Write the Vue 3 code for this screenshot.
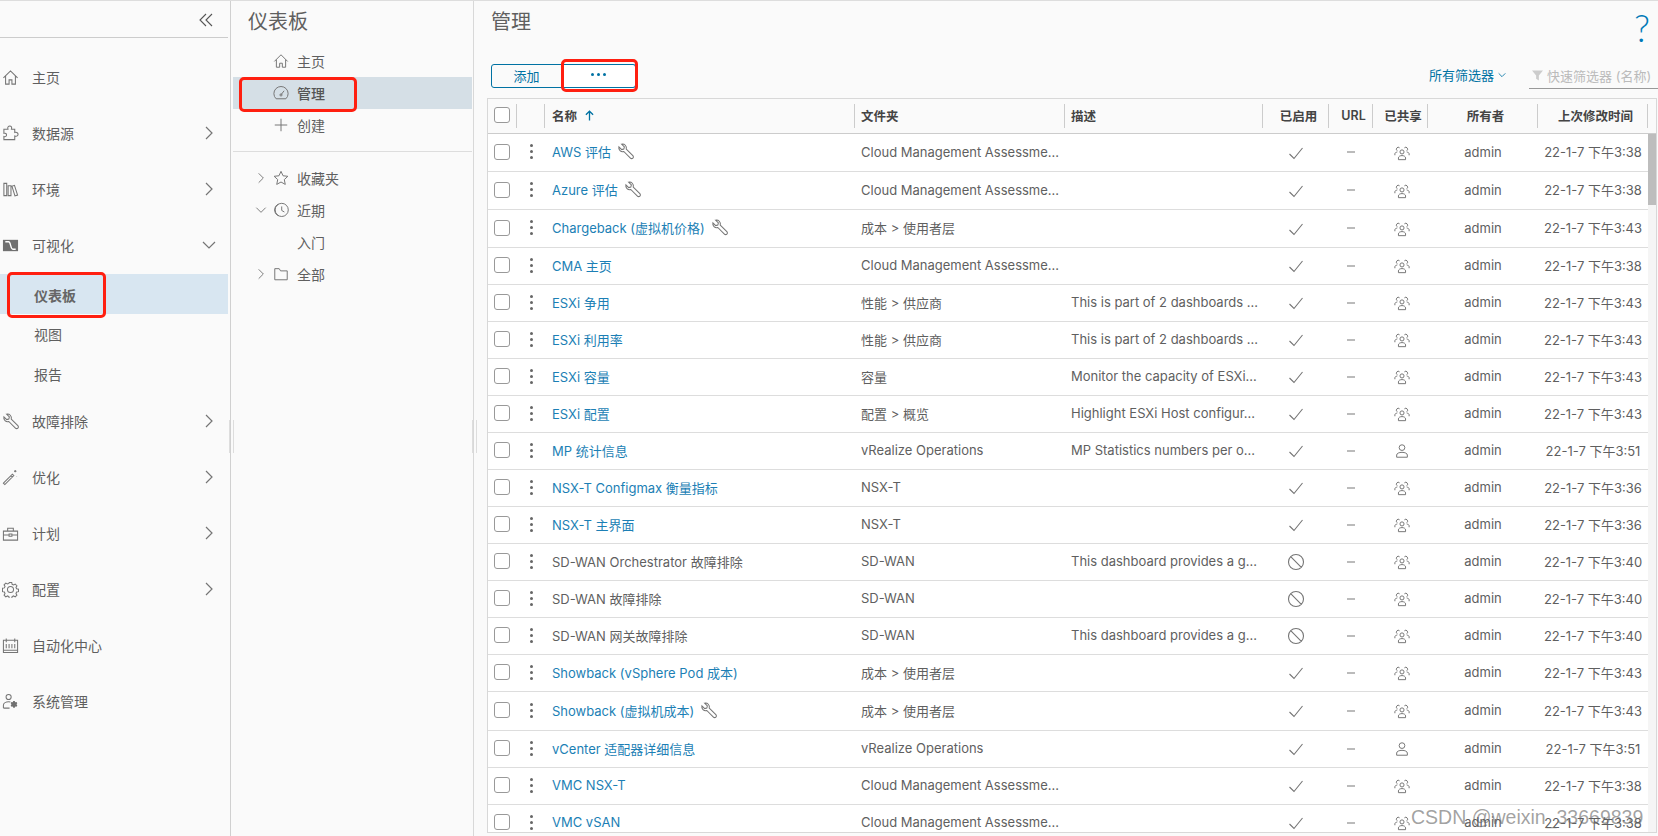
<template>
  <div class="app">
    <!-- 左侧主导航 -->
    <aside class="nav">
      <div class="nav-head">
        <svg class="ic collapse" viewBox="0 0 18 18"><path d="M9 3 3 9l6 6M15 3 9 9l6 6" /></svg>
      </div>
      <ul class="nav-list">
        <template v-for="item in navItems" :key="item.label">
          <li class="nav-item">
            <svg class="ic nav-ic" :class="{ 'ic-graph': item.icon === 'graph' }" viewBox="0 0 18 18">
              <path v-if="solid[item.icon]" class="solid" :d="solid[item.icon]" />
              <path :d="icons[item.icon]" />
            </svg>
            <span class="nav-label">{{ item.label }}</span>
            <svg v-if="item.arrow" class="ic arrow" viewBox="0 0 18 18">
              <path :d="item.arrow === 'down' ? 'M3 6l6 6 6-6' : 'M6 3l6 6-6 6'" />
            </svg>
          </li>
          <template v-if="item.children">
            <li
              v-for="sub in item.children"
              :key="sub"
              class="nav-sub"
              :class="{ active: sub === '仪表板' }"
            >
              {{ sub }}
            </li>
          </template>
        </template>
      </ul>
      <div class="mark mark-nav"></div>
      <div class="grip"></div>
    </aside>

    <!-- 仪表板面板 -->
    <section class="panel">
      <h2 class="panel-title">仪表板</h2>
      <ul class="panel-list">
        <li v-for="item in panelItems" :key="item.label" class="panel-item" :class="{ active: item.active }">
          <svg class="ic" viewBox="0 0 18 18"><path :d="icons[item.icon]" /></svg>
          <span>{{ item.label }}</span>
        </li>
      </ul>
      <div class="panel-line"></div>
      <ul class="tree">
        <li v-for="item in treeItems" :key="item.label" class="tree-item">
          <span class="tree-arrow">
            <svg v-if="item.arrow" class="ic" viewBox="0 0 18 18">
              <path :d="item.arrow === 'down' ? 'M3 6l6 6 6-6' : 'M6 3l6 6-6 6'" />
            </svg>
          </span>
          <span class="tree-icon">
            <svg v-if="item.icon" class="ic" viewBox="0 0 18 18"><path :d="icons[item.icon]" /></svg>
          </span>
          <span>{{ item.label }}</span>
        </li>
      </ul>
      <div class="mark mark-panel"></div>
      <div class="grip"></div>
    </section>

    <!-- 管理内容 -->
    <main class="main">
      <div class="main-head">
        <h1 class="main-title">管理</h1>
        <span class="help">?</span>
      </div>

      <div class="toolbar">
        <div class="btn-group">
          <button class="btn btn-add">添加</button>
          <button class="btn btn-more">
            <i></i><i></i><i></i>
          </button>
          <div class="mark mark-btn"></div>
        </div>
        <div class="filters">
          <span class="all-filters">所有筛选器
            <svg class="ic" viewBox="0 0 18 18"><path d="M3 6l6 6 6-6" /></svg>
          </span>
          <div class="quick-filter">
            <svg viewBox="0 0 12 12"><path d="M0 1h12L7.5 6.500V12l-3-2V6.500z" /></svg>
            <span>快速筛选器 (名称)</span>
          </div>
        </div>
      </div>

      <div class="table">
        <div class="row head">
          <div class="cell c-check"><span class="box"></span></div>
          <div class="cell c-menu"></div>
          <div class="cell c-name">名称
            <svg class="ic sort" viewBox="0 0 18 18"><path d="M9 16V3M4 8l5-5 5 5" /></svg>
          </div>
          <div class="cell c-folder">文件夹</div>
          <div class="cell c-desc">描述</div>
          <div class="cell c-on">已启用</div>
          <div class="cell c-url">URL</div>
          <div class="cell c-share">已共享</div>
          <div class="cell c-owner">所有者</div>
          <div class="cell c-date">上次修改时间</div>
        </div>
        <div class="body">
          <div class="rows">
            <div v-for="r in rows" :key="r.name" class="row" :style="{ height: r.h + 'px' }">
              <div class="cell c-check"><span class="box"></span></div>
              <div class="cell c-menu"><span class="dots"><i></i><i></i><i></i></span></div>
              <div class="cell c-name">
                <span :class="r.off ? 'plain' : 'link'">{{ r.name }}</span>
                <svg v-if="r.tool" class="ic tool" viewBox="0 0 18 18"><path :d="icons.wrench" /></svg>
              </div>
              <div class="cell c-folder">{{ r.folder }}</div>
              <div class="cell c-desc">{{ r.desc }}</div>
              <div class="cell c-on">
                <svg class="ic" viewBox="0 0 18 18"><path :d="r.off ? icons.ban : icons.check" /></svg>
              </div>
              <div class="cell c-url"><span class="dash"></span></div>
              <div class="cell c-share">
                <svg class="ic" viewBox="0 0 18 18"><path :d="r.single ? icons.user : icons.users" /></svg>
              </div>
              <div class="cell c-owner">admin</div>
              <div class="cell c-date">22-1-7 下午{{ r.time }}</div>
            </div>
          </div>
          <div class="scrollbar"><div class="thumb"></div></div>
        </div>
      </div>
    </main>

    <div class="watermark">CSDN @weixin_33669839</div>
  </div>
</template>

<script setup>
const icons = {
  home: 'M1.500 9.500 9 2l7.500 7.500M3.800 7.500V16h3.700v-4.500h3V16h3.700V7.500',
  puzzle: 'M2 4.500h4.300C5.500 2 7 1 8.300 1s2.500 1.200 1.700 3.500h3.500V8c2.300-.7 3.500.5 3.500 1.800s-1.200 2.600-3.500 1.800V15.500H2v-3.300c1.800.5 2.800-.5 2.800-1.700S3.800 8.300 2 8.800z',
  library: 'M2 2.500h3v13H2zM6.500 5h3v10.500h-3zM10.500 5.500l2.700-.9 3.300 10.300-2.800.9z',
  graph: 'M3.500 5H7c2.500 0 1.800 8 4.500 8h3',
  wrench: 'M2 4l3 3 2.200-.6.600-2.200-3-3a4.200 4.200 0 0 1 5 5.200l7 7a1.800 1.800 0 0 1-2.600 2.600l-7-7A4.200 4.200 0 0 1 2 4z',
  wand: 'M1.500 15 11 5.500l1.500 1.500L3 16.500zM9.500 7l1.500 1.500M14 1v2.500M12.700 2.300h2.600M15.500 7.500v.1M10 2v.1M16.500 11v.1',
  tool: 'M1.500 6.500h15V16h-15zM6 6.500V3.500h6v3M1.500 10.500h6M10.500 10.500h6M7.500 9.500h3v2.500h-3z',
  gear: 'M7.700 1.500h2.600l.4 2 1.500.7 1.800-1 1.800 1.800-1 1.800.7 1.500 2 .4v2.600l-2 .4-.7 1.500 1 1.800-1.800 1.800-1.800-1-1.500.7-.4 2H7.700l-.4-2-1.500-.7-1.800 1-1.800-1.800 1-1.800-.7-1.500-2-.4V7.700l2-.4.7-1.500-1-1.800 1.800-1.800 1.800 1 1.500-.7zM9 5.800a3.200 3.200 0 1 0 0 6.400 3.200 3.200 0 0 0 0-6.400z',
  calendar: 'M1.500 3.500h15v13h-15zM4.500 1.500v4M13.500 1.500v4M1.500 14h15M4.500 7.500v4.500M7.500 7.500v4.500M10.500 7.500v4.500M13.500 7.500v4.500',
  admin: 'M7 1.500a2.700 2.700 0 1 0 0 5.400 2.700 2.700 0 0 0 0-5.400zM1.500 16v-3c0-2.500 3-3.800 5.500-3.800.7 0 1.300.1 1.900.3M1.500 16h6.500',
  gauge: 'M3.500 15.500a8 8 0 1 1 11 0zM9 11l3.500-4.500M9 10a1.200 1.200 0 1 0 0 2.400A1.200 1.200 0 0 0 9 10z',
  plus: 'M9 2v14M2 9h14',
  star: 'M9 1.500l2.300 5 5.400.6-4 3.700 1.100 5.400L9 13.500l-4.800 2.700 1.100-5.400-4-3.700 5.400-.6z',
  clock: 'M9.800 1.500a7.300 7.300 0 1 1 0 14.800 7.300 7.300 0 0 1 0-14.800zM6 2.300a7.300 7.300 0 0 0 0 13.300M9.800 5v4.500l3 1.800',
  folder: 'M2 3h5l1.500 2.500H16v10H2z',
  check: 'M2.500 10l4.500 4.500L15.500 4',
  ban: 'M9 1.500a7.500 7.500 0 1 0 0 15 7.500 7.500 0 0 0 0-15zM3.700 3.700l10.600 10.600',
  user: 'M9 2a3.200 3.200 0 1 0 0 6.400A3.200 3.200 0 0 0 9 2zM3 16v-2.500c0-1.800 2.700-3 6-3s6 1.200 6 3V16z',
  users: 'M9 5.500a2.300 2.300 0 1 0 0 4.600 2.300 2.300 0 0 0 0-4.600zM5 16.500v-2c0-1.500 1.800-2.600 4-2.600s4 1.100 4 2.600v2zM6.300 3.200a2.100 2.100 0 1 0-2.300 3.400M11.700 3.200a2.100 2.100 0 1 1 2.300 3.400M1 11.500V10c0-1.200 1.200-2 2.600-2M17 11.500V10c0-1.200-1.200-2-2.600-2'
}

const solid = {
  graph: 'M1 3h16v12H1z',
  admin: 'M13.500 8.500l.5 1.300 1.400-.3.800 1.400-.9 1.100.9 1.100-.8 1.400-1.400-.3-.5 1.300h-1.600l-.5-1.300-1.400.3-.8-1.400.9-1.100-.9-1.100.8-1.400 1.400.3.500-1.300z'
}

const navItems = [
  { label: '主页', icon: 'home' },
  { label: '数据源', icon: 'puzzle', arrow: 'right' },
  { label: '环境', icon: 'library', arrow: 'right' },
  { label: '可视化', icon: 'graph', arrow: 'down', children: ['仪表板', '视图', '报告'] },
  { label: '故障排除', icon: 'wrench', arrow: 'right' },
  { label: '优化', icon: 'wand', arrow: 'right' },
  { label: '计划', icon: 'tool', arrow: 'right' },
  { label: '配置', icon: 'gear', arrow: 'right' },
  { label: '自动化中心', icon: 'calendar' },
  { label: '系统管理', icon: 'admin' }
]

const panelItems = [
  { label: '主页', icon: 'home' },
  { label: '管理', icon: 'gauge', active: true },
  { label: '创建', icon: 'plus' }
]

const treeItems = [
  { label: '收藏夹', icon: 'star', arrow: 'right' },
  { label: '近期', icon: 'clock', arrow: 'down' },
  { label: '入门' },
  { label: '全部', icon: 'folder', arrow: 'right' }
]

const cma = 'Cloud Management Assessme...'
const part = 'This is part of 2 dashboards ...'
const dash = 'This dashboard provides a g...'
const cost = '成本 > 使用者层'
const vendor = '性能 > 供应商'
const vrops = 'vRealize Operations'

const rows = [
  { name: 'AWS 评估', folder: cma, time: '3:38', tool: true, h: 38 },
  { name: 'Azure 评估', folder: cma, time: '3:38', tool: true, h: 38 },
  { name: 'Chargeback (虚拟机价格)', folder: cost, time: '3:43', tool: true, h: 38 },
  { name: 'CMA 主页', folder: cma, time: '3:38', h: 37 },
  { name: 'ESXi 争用', folder: vendor, desc: part, time: '3:43', h: 37 },
  { name: 'ESXi 利用率', folder: vendor, desc: part, time: '3:43', h: 37 },
  { name: 'ESXi 容量', folder: '容量', desc: 'Monitor the capacity of ESXi...', time: '3:43', h: 37 },
  { name: 'ESXi 配置', folder: '配置 > 概览', desc: 'Highlight ESXi Host configur...', time: '3:43', h: 37 },
  { name: 'MP 统计信息', folder: vrops, desc: 'MP Statistics numbers per o...', time: '3:51', single: true, h: 37 },
  { name: 'NSX-T Configmax 衡量指标', folder: 'NSX-T', time: '3:36', h: 37 },
  { name: 'NSX-T 主界面', folder: 'NSX-T', time: '3:36', h: 37 },
  { name: 'SD-WAN Orchestrator 故障排除', folder: 'SD-WAN', desc: dash, time: '3:40', off: true, h: 37 },
  { name: 'SD-WAN 故障排除', folder: 'SD-WAN', time: '3:40', off: true, h: 37 },
  { name: 'SD-WAN 网关故障排除', folder: 'SD-WAN', desc: dash, time: '3:40', off: true, h: 37 },
  { name: 'Showback (vSphere Pod 成本)', folder: cost, time: '3:43', h: 37 },
  { name: 'Showback (虚拟机成本)', folder: cost, time: '3:43', tool: true, h: 39 },
  { name: 'vCenter 适配器详细信息', folder: vrops, time: '3:51', single: true, h: 37 },
  { name: 'VMC NSX-T', folder: cma, time: '3:38', h: 37 },
  { name: 'VMC vSAN', folder: cma, time: '3:38', h: 37 }
]
</script>

<style>
html,
body {
  margin: 0;
  background: #fafafa;
}
</style>

<style scoped>
.app {
  position: relative;
  display: flex;
  height: 836px;
  box-sizing: border-box;
  border-top: 1px solid #ddd;
  overflow: hidden;
  background: #fafafa;
  color: #5f5f5f;
  font-family: Inter, "Noto Sans CJK SC", sans-serif;
  font-size: 13px;
}

ul {
  list-style: none;
  margin: 0;
  padding: 0;
}

.ic {
  display: block;
  flex: none;
  width: 16px;
  height: 16px;
  fill: none;
  stroke: #757575;
  stroke-width: 1.100;
}

.ic .solid {
  fill: #707070;
  stroke: none;
}

.ic-graph path:last-child {
  stroke: #fff;
  stroke-width: 1.400;
}

/* 主导航 */
.nav {
  position: relative;
  flex: none;
  width: 231px;
  box-sizing: border-box;
  padding-right: 2px;
  border-right: 1px solid #d0d0d0;
}

.nav-head {
  display: flex;
  justify-content: flex-end;
  align-items: center;
  height: 36px;
  padding-right: 13px;
  border-bottom: 1px solid #ccc;
}

.collapse {
  width: 18px;
  height: 18px;
  margin-top: 1px;
  stroke: #555;
}

.nav-list {
  padding-top: 11px;
}

.nav-item {
  display: flex;
  align-items: center;
  height: 56px;
  padding-left: 2px;
  font-size: 14px;
}

.nav-ic {
  width: 17px;
  height: 17px;
}

.nav-label {
  margin-left: 13px;
}

.arrow {
  margin-left: auto;
  margin-right: 10px;
  width: 18px;
  height: 18px;
  stroke-width: 1.200;
}

.nav-sub {
  display: flex;
  align-items: center;
  height: 40px;
  padding-left: 34px;
  padding-top: 1px;
  box-sizing: border-box;
  font-size: 14px;
}

.nav-sub.active {
  margin-top: 1px;
  margin-bottom: -1px;
  background: #d8e6f1;
  font-weight: 700;
  color: #666;
}

.mark {
  position: absolute;
  box-sizing: border-box;
  border: 3px solid #ff1f10;
  border-radius: 5px;
}

.mark-nav {
  left: 7px;
  top: 271px;
  width: 99px;
  height: 46px;
}

.grip {
  position: absolute;
  top: 419px;
  right: -4px;
  width: 3px;
  height: 33px;
  border-left: 1px solid #ddd;
  border-right: 1px solid #ddd;
}

/* 仪表板面板 */
.panel {
  position: relative;
  flex: none;
  width: 243px;
  box-sizing: border-box;
  padding: 0 1px 0 2px;
  border-right: 1px solid #d8d8d8;
}

.panel-title {
  margin: 0;
  height: 44px;
  padding-left: 15px;
  font-size: 20px;
  font-weight: 400;
  line-height: 42px;
}

.panel-item {
  display: flex;
  align-items: center;
  gap: 8px;
  height: 32px;
  padding-left: 40px;
  font-size: 14px;
}

.panel-item.active {
  background: #d5dfe6;
  font-weight: 500;
  color: #555;
}

.panel-line {
  height: 1px;
  margin-top: 10px;
  background: #ddd;
}

.tree {
  padding-top: 10px;
}

.tree-item {
  display: flex;
  align-items: center;
  height: 32px;
  font-size: 14px;
}

.tree-arrow {
  width: 19px;
  margin-left: 21px;
}

.tree-arrow .ic {
  width: 14px;
  height: 14px;
  stroke-width: 1.200;
}

.tree-icon {
  width: 24px;
}

.mark-panel {
  left: 8px;
  top: 76px;
  width: 118px;
  height: 35px;
}

/* 主内容 */
.main {
  flex: 1;
  min-width: 0;
  display: flex;
  flex-direction: column;
  padding-left: 13px;
}

.main-head {
  display: flex;
  justify-content: space-between;
  height: 63px;
}

.main-title {
  margin: 0;
  padding-left: 4px;
  font-size: 20px;
  font-weight: 400;
  line-height: 42px;
}

.help {
  margin: 5px 8px 0 0;
  font-family: Lato, sans-serif;
  font-size: 37px;
  font-weight: 300;
  line-height: 44px;
  color: #0079b8;
}

.toolbar {
  display: flex;
  justify-content: space-between;
  height: 34px;
  padding-left: 4px;
}

.btn-group {
  position: relative;
  display: flex;
  height: 24px;
}

.btn {
  box-sizing: border-box;
  height: 24px;
  padding: 0;
  background: #fff;
  border: 1px solid #0072a3;
  color: #0072a3;
  font: inherit;
}

.btn-add {
  width: 71px;
  padding-bottom: 2px;
  border-radius: 3px 0 0 3px;
  background: transparent;
}

.btn-more {
  display: flex;
  justify-content: center;
  gap: 3px;
  width: 74px;
  padding-top: 8px;
  border-left: 0;
  border-radius: 0 3px 3px 0;
}

.btn-more i {
  width: 3px;
  height: 3px;
  border-radius: 50%;
  background: #0072a3;
}

.mark-btn {
  left: 70px;
  top: -5px;
  width: 77px;
  height: 33px;
}

.filters {
  display: flex;
  align-items: flex-start;
}

.all-filters {
  display: flex;
  align-items: center;
  gap: 3px;
  height: 21px;
  color: #0072a3;
}

.all-filters .ic {
  width: 10px;
  height: 10px;
  stroke: #0072a3;
  stroke-width: 1.500;
}

.quick-filter {
  display: flex;
  align-items: center;
  gap: 4px;
  box-sizing: border-box;
  width: 129px;
  height: 25px;
  margin-left: 22px;
  padding-left: 3px;
  padding-bottom: 2px;
  border-bottom: 1px solid #999;
  color: #bbb;
  white-space: nowrap;
}

.quick-filter svg {
  width: 11px;
  height: 12px;
  fill: #ccc;
}

.table {
  flex: 1;
  min-height: 0;
  display: flex;
  flex-direction: column;
  box-sizing: border-box;
  height: 735px;
  margin-right: 1px;
  margin-bottom: 3px;
  border: 1px solid #d8d8d8;
  background: #fff;
  overflow: hidden;
}

.row {
  display: flex;
  align-items: center;
  box-sizing: border-box;
  height: 37px;
  border-bottom: 1px solid #ddd;
  white-space: nowrap;
}

.row.head {
  flex: none;
  width: 100%;
  height: 35px;
  border-bottom: 1px solid #ccc;
  background: #fafafa;
  font-weight: 600;
  font-size: 12.500px;
  color: #444;
}

.head .cell {
  height: 24px;
  padding-bottom: 2px;
  border-right: 1px solid #ccc;
}

.head .c-on,
.head .c-url,
.head .c-share,
.head .c-owner,
.head .c-date {
  padding-left: 6px;
}

.cell {
  flex: none;
  display: flex;
  align-items: center;
  box-sizing: border-box;
  padding-bottom: 2px;
  overflow: hidden;
}

.c-check { width: 29px; justify-content: center; padding-right: 1px; }
.c-menu { width: 28px; justify-content: center; }
.c-name { width: 310px; padding-left: 7px; }
.c-folder { width: 210px; padding-left: 6px; }
.c-desc { width: 198px; padding-left: 6px; }
.c-on { width: 66px; justify-content: center; padding-bottom: 0; }
.c-url { width: 44px; justify-content: center; padding-bottom: 0; }
.c-share { width: 55px; justify-content: center; padding-bottom: 0; padding-left: 2px; }
.c-owner { width: 110px; justify-content: center; }
.c-date { width: 110px; justify-content: center; }

.box {
  width: 14px;
  height: 14px;
  border: 1px solid #999;
  border-radius: 3px;
  background: #fff;
}

.dots {
  display: flex;
  flex-direction: column;
  gap: 3px;
}

.dots i {
  width: 3px;
  height: 3px;
  border-radius: 50%;
  background: #666;
}

.link {
  color: #1c7fb5;
}

.plain {
  color: #5f5f5f;
}

.sort {
  margin-left: 6px;
  width: 13px;
  height: 13px;
  stroke: #0072a3;
  stroke-width: 1.800;
}

.tool {
  margin-left: 6px;
  width: 17px;
  height: 17px;
}

.c-on .ic {
  width: 18px;
  height: 18px;
}

.c-share .ic {
  width: 16px;
  height: 16px;
}

.dash {
  width: 8px;
  height: 1px;
  border-top: 2px solid #bbb;
}

.body {
  flex: 1;
  min-height: 0;
  display: flex;
}

.rows {
  width: 1160px;
  flex: none;
}

.scrollbar {
  flex: 1;
  background: #f5f5f5;
}

.thumb {
  height: 71px;
  background: #bdbdbd;
}

.watermark {
  position: absolute;
  left: 1411px;
  top: 804px;
  font-family: "Liberation Sans", sans-serif;
  font-size: 19.500px;
  line-height: 24px;
  color: rgba(100, 100, 100, 0.6);
  white-space: nowrap;
}
</style>
